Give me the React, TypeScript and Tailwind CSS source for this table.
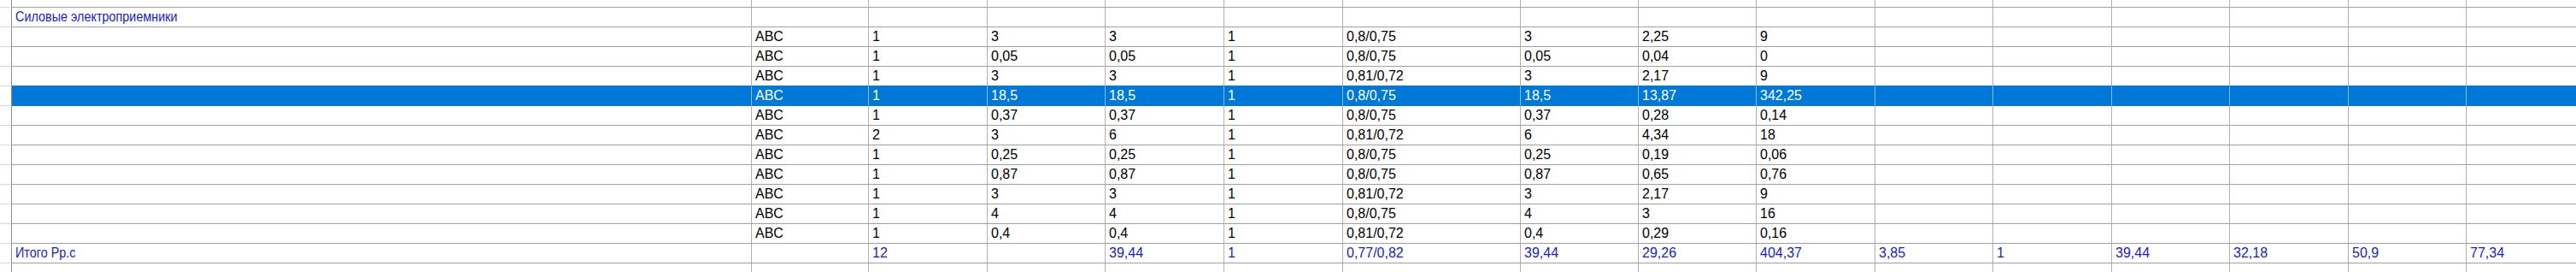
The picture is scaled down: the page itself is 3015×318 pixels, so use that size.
import React from "react";

const GRID =
  "grid grid-cols-[14px_866px_137px_139px_138px_139px_139px_208px_138px_138px_139px_138px_139px_138px_139px_138px_138px] w-[3025px]";

const E = ["", "", "", "", "", "", "", "", "", "", "", "", "", "", "", ""];

const data: string[][] = [
  ["", "ABC", "1", "3", "3", "1", "0,8/0,75", "3", "2,25", "9"],
  ["", "ABC", "1", "0,05", "0,05", "1", "0,8/0,75", "0,05", "0,04", "0"],
  ["", "ABC", "1", "3", "3", "1", "0,81/0,72", "3", "2,17", "9"],
  ["", "ABC", "1", "18,5", "18,5", "1", "0,8/0,75", "18,5", "13,87", "342,25"],
  ["", "ABC", "1", "0,37", "0,37", "1", "0,8/0,75", "0,37", "0,28", "0,14"],
  ["", "ABC", "2", "3", "6", "1", "0,81/0,72", "6", "4,34", "18"],
  ["", "ABC", "1", "0,25", "0,25", "1", "0,8/0,75", "0,25", "0,19", "0,06"],
  ["", "ABC", "1", "0,87", "0,87", "1", "0,8/0,75", "0,87", "0,65", "0,76"],
  ["", "ABC", "1", "3", "3", "1", "0,81/0,72", "3", "2,17", "9"],
  ["", "ABC", "1", "4", "4", "1", "0,8/0,75", "4", "3", "16"],
  ["", "ABC", "1", "0,4", "0,4", "1", "0,81/0,72", "0,4", "0,29", "0,16"],
];

const pad = (r: string[]) => [...r, ...E].slice(0, 16);

type RowSpec = {
  cells: string[];
  h: "h-[9px]" | "h-[23px]" | "h-[10px]";
  blue?: boolean;
  selected?: boolean;
  beforeSel?: boolean;
  noBottom?: boolean;
};

const rows: RowSpec[] = [
  { cells: E, h: "h-[9px]" },
  { cells: pad(["Силовые электроприемники"]), h: "h-[23px]", blue: true },
  ...data.map((d, i) => ({
    cells: pad(d),
    h: "h-[23px]" as const,
    selected: i === 3,
    beforeSel: i === 2,
  })),
  {
    cells: [
      "Итого Рр.с",
      "",
      "12",
      "",
      "39,44",
      "1",
      "0,77/0,82",
      "39,44",
      "29,26",
      "404,37",
      "3,85",
      "1",
      "39,44",
      "32,18",
      "50,9",
      "77,34",
    ],
    h: "h-[23px]",
    blue: true,
  },
  { cells: E, h: "h-[10px]", noBottom: true },
];

const isCyr = (s: string) => /[А-Яа-яЁё]/.test(s);

function Row({ spec }: { spec: RowSpec }) {
  const base = spec.selected
    ? "bg-[#0078d7] text-white border-r-[#8cbbe8] border-b-[#0078d7]"
    : spec.beforeSel
    ? "bg-white border-r-[#b0b0b0] border-b-[#0078d7]"
    : "bg-white border-r-[#b0b0b0] border-b-[#a0a0a0]";
  const color = spec.selected
    ? "text-white"
    : spec.blue
    ? "text-[#1c1cc4]"
    : "text-black";
  return (
    <div className={`${GRID} ${spec.h}`}>
      <div
        className={`border-r border-r-[#8a8a8a] ${
          spec.noBottom ? "" : "border-b border-b-[#d8d8d8]"
        } bg-white`}
      />
      {spec.cells.map((c, i) => (
        <div
          key={i}
          className={`border-r ${
            spec.noBottom ? "" : "border-b"
          } ${base} ${color} pl-1 whitespace-nowrap overflow-hidden`}
        >
          {isCyr(c) ? (
            <span className="inline-block origin-left scale-x-[0.9]">{c}</span>
          ) : (
            c
          )}
        </div>
      ))}
    </div>
  );
}

export default function App() {
  return (
    <div className="w-[3015px] h-[318px] overflow-hidden bg-white font-['Liberation_Sans',Arial,sans-serif] text-[16px] leading-[22px]">
      {rows.map((r, i) => (
        <Row key={i} spec={r} />
      ))}
    </div>
  );
}
